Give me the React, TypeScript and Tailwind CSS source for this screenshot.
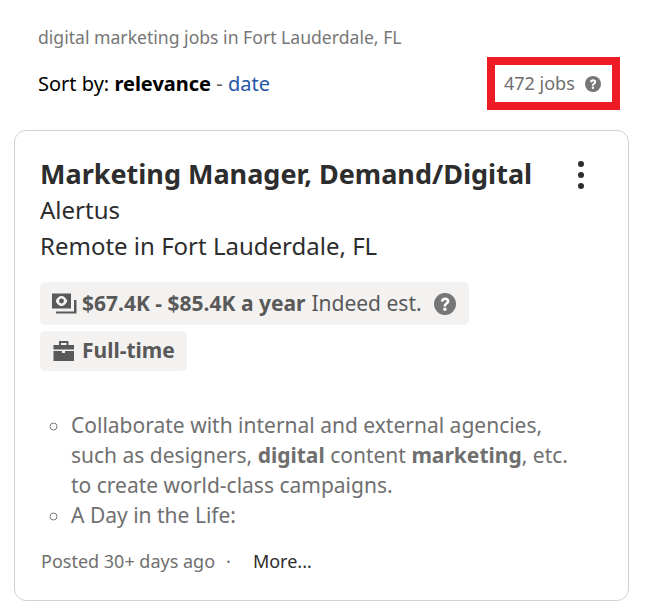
const font = "font-['Noto_Sans',sans-serif]";

function HelpIcon({ className }: { className: string }) {
  return (
    <svg viewBox="0 0 24 24" className={className}>
      <circle cx="12" cy="12" r="12" fill="#767676" />
      <path
        d="M7.400 9.200c.2-2.700 2.100-4.200 4.800-4.200 2.700 0 4.600 1.600 4.600 3.900 0 1.700-.9 2.600-2.100 3.400-1.100.7-1.400 1.200-1.400 2.300h-2.900c0-1.900.6-2.900 1.900-3.800 1-.7 1.500-1.100 1.500-1.800 0-.8-.6-1.300-1.500-1.300-1 0-1.500.6-1.700 1.500H7.400z"
        fill="#fff"
      />
      <circle cx="11.900" cy="17.700" r="1.800" fill="#fff" />
    </svg>
  );
}

function MoneyIcon() {
  return (
    <svg viewBox="0 0 26 24" className="h-6 w-[26px] shrink-0">
      <path
        fillRule="evenodd"
        d="M1 1.500h19v15H1v-15zm9.500 2.500c-3 0-5 2.700-5.800 5 .8 2.300 2.800 5 5.800 5s5-2.700 5.800-5c-.8-2.300-2.800-5-5.800-5z"
        fill="#595959"
      />
      <circle cx="10.500" cy="9" r="2.400" fill="#595959" />
      <path d="M23 8h2.500v13.500H5v-2h18V8z" fill="#595959" />
    </svg>
  );
}

function BriefcaseIcon() {
  return (
    <svg viewBox="0 0 24 24" className="h-6 w-6 shrink-0">
      <path
        fillRule="evenodd"
        d="M9.500 2h7a1 1 0 0 1 1 1v3H23v4.500H2.500V6H8V3a1 1 0 0 1 1.500-1zm.5 2v2h5.500V4H10z"
        fill="#595959"
      />
      <path d="M2.500 12H11v2h3v-2h9v10H2.500V12z" fill="#595959" />
    </svg>
  );
}

export default function App() {
  return (
    <div className={`${font} h-[606px] w-[645px] overflow-hidden bg-white`}>
      <div className="pl-[38px] pt-[25px] text-[17.6px] leading-6 text-[#767676]">
        digital marketing jobs in Fort Lauderdale, FL
      </div>

      <div className="mt-[8px] flex items-center justify-between pl-[38px] pr-[25px]">
        <div className="text-[20px] leading-6 text-[#000]">
          Sort by: <b className="font-bold">relevance</b> <span className="text-[#595959]">-</span>{" "}
          <span className="text-[#2557a7]">date</span>
        </div>
        <div className="flex h-[53px] w-[133px] items-center border-[8px] border-[#ed1c24] pl-[9px] text-[18px] text-[#6f6f6f]">
          <span>472 jobs</span>
          <HelpIcon className="ml-[10px] h-4 w-4" />
        </div>
      </div>

      <div className="ml-[14px] mt-[20px] h-[471px] w-[615px] rounded-[12px] border border-[#d4d2d0] pl-[25px] pt-[23px]">
        <div className="flex items-start justify-between pr-[44px]">
          <div className="text-[27px] font-bold leading-[40px] text-[#2d2d2d]">Marketing Manager, Demand/Digital</div>
          <div className="mt-[7px] flex flex-col gap-[5px]">
            <span className="h-[6px] w-[6px] rounded-full bg-[#2d2d2d]" />
            <span className="h-[6px] w-[6px] rounded-full bg-[#2d2d2d]" />
            <span className="h-[6px] w-[6px] rounded-full bg-[#2d2d2d]" />
          </div>
        </div>
        <div className="-mt-[2px] text-[24px] leading-[36px] text-[#2d2d2d]">Alertus</div>
        <div className="text-[24px] leading-[36px] text-[#2d2d2d]">Remote in Fort Lauderdale, FL</div>

        <div className="mt-[18px] flex h-[43px] w-[429px] items-center rounded-[5px] bg-[#f3f2f1] pl-[11px] text-[21px] text-[#595959]">
          <MoneyIcon />
          <b className="ml-[5px] font-bold">$67.4K - $85.4K a year</b>
          <span className="ml-[6px]">Indeed est.</span>
          <HelpIcon className="ml-[12px] h-[22px] w-[22px]" />
        </div>
        <div className="mt-[6px] flex h-[40px] w-[147px] items-center rounded-[5px] bg-[#f3f2f1] pl-[11px] text-[21px] font-bold text-[#595959]">
          <BriefcaseIcon />
          <span className="ml-[7px]">Full-time</span>
        </div>

        <ul className="mt-[39px] list-[circle] pl-[31px] text-[21px] leading-[30px] text-[#6f6f6f] marker:text-[#767676]">
          <li>
            Collaborate with internal and external agencies,
            <br />
            such as designers, <b className="font-bold">digital</b> content <b className="font-bold">marketing</b>, etc.
            <br />
            to create world-class campaigns.
          </li>
          <li>A Day in the Life:</li>
        </ul>

        <div className="mt-[18px] flex items-center text-[18px] text-[#6f6f6f]">
          <span className="ml-[1px]">Posted 30+ days ago</span>
          <span className="ml-[11px]">·</span>
          <span className="ml-[22px] text-[#2d2d2d]">More...</span>
        </div>
      </div>
    </div>
  );
}
